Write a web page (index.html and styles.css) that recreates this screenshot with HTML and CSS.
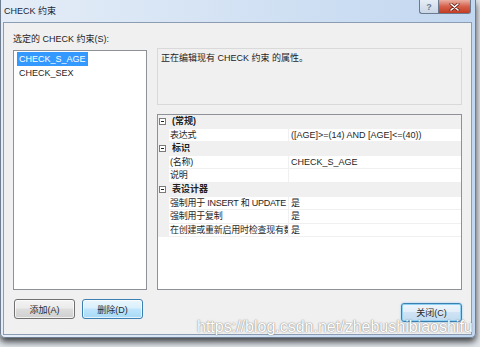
FILE: index.html
```html
<!DOCTYPE html>
<html lang="zh-CN">
<head>
  <meta charset="UTF-8" />
  <title>CHECK 约束</title>
  <meta name="viewport" content="width=device-width, initial-scale=1.0" />
  <link rel="stylesheet" href="styles.css">
</head>
<body>
  <div class="window">
    <div class="titlebar">
      <span class="title">CHECK 约束</span>
      <div class="caption-buttons">
        <span class="cap-btn help">?</span>
        <span class="cap-btn close">
          <svg width="11" height="8" viewBox="0 0 11 8">
            <path d="M2 1 L9 7 M9 1 L2 7" stroke="#6a2318" stroke-width="3" stroke-linecap="round" />
            <path d="M2 1 L9 7 M9 1 L2 7" stroke="#ffffff" stroke-width="1.6" stroke-linecap="round" />
          </svg>
        </span>
      </div>
    </div>

    <div class="client">
      <div class="main">
        <div class="left-col">
          <div class="label">选定的 CHECK 约束(S):</div>
          <div class="listbox">
            <div class="item"><span class="selected">CHECK_S_AGE</span></div>
            <div class="item"><span>CHECK_SEX</span></div>
          </div>
        </div>

        <div class="right-col">
          <div class="desc">正在编辑现有 CHECK 约束 的属性。</div>
          <div class="grid">
            <div class="row cat"><span class="gutter"><i class="toggle"></i></span><span class="cat-name">(常规)</span></div>
            <div class="row"><span class="gutter"></span><span class="name">表达式</span><span class="value">([AGE]&gt;=(14) AND [AGE]&lt;=(40))</span></div>
            <div class="row cat"><span class="gutter"><i class="toggle"></i></span><span class="cat-name">标识</span></div>
            <div class="row"><span class="gutter"></span><span class="name">(名称)</span><span class="value">CHECK_S_AGE</span></div>
            <div class="row"><span class="gutter"></span><span class="name">说明</span><span class="value"></span></div>
            <div class="row cat"><span class="gutter"><i class="toggle"></i></span><span class="cat-name">表设计器</span></div>
            <div class="row"><span class="gutter"></span><span class="name">强制用于 INSERT 和 UPDATE</span><span class="value">是</span></div>
            <div class="row"><span class="gutter"></span><span class="name">强制用于复制</span><span class="value">是</span></div>
            <div class="row"><span class="gutter"></span><span class="name">在创建或重新启用时检查现有数据</span><span class="value">是</span></div>
          </div>
        </div>
      </div>

      <div class="footer">
        <div class="btn-group">
          <button class="btn">添加(A)</button>
          <button class="btn hot">删除(D)</button>
        </div>
        <button class="btn default">关闭(C)</button>
      </div>
    </div>

    <div class="watermark">https://blog.csdn.net/zhebushibiaoshifu</div>
  </div>
</body>
</html>
```

FILE: styles.css
```css
body {
  margin: 0;
  width: 480px;
  height: 347px;
  overflow: hidden;
  background-color: #dfe4ea;
  font-family: "Liberation Sans", "Noto Sans CJK SC", sans-serif;
  font-size: 9px;
  color: #1e1e1e;
}

.window {
  position: relative;
  box-sizing: border-box;
  width: 476px;
  height: 338px;
  display: flex;
  flex-direction: column;
  padding: 0 3px 2px 2px;
  border: 1px solid #6e7d90;
  border-top: none;
  border-radius: 0 0 5px 5px;
  background: linear-gradient(to right, #e4edf7, #c2d7f0);
  box-shadow: 0 4px 6px rgba(0, 0, 0, 0.7);
}

.titlebar {
  height: 22px;
  flex-shrink: 0;
  display: flex;
  justify-content: space-between;
  align-items: flex-start;
}

.title {
  padding: 5px 0 0 1px;
  line-height: 12px;
  color: #1b2636;
}

.caption-buttons {
  display: flex;
  margin-right: 1px;
}

.cap-btn {
  box-sizing: border-box;
  height: 14px;
  display: flex;
  align-items: center;
  justify-content: center;
  border: 1px solid #6b7a8e;
  border-top: none;
}

.help {
  width: 19px;
  border-right: none;
  border-radius: 0 0 0 3px;
  background: linear-gradient(#e6edf6, #c9d6e6);
  color: #6a7a90;
  font-weight: bold;
  font-size: 9px;
}

.close {
  width: 33px;
  border-radius: 0 0 3px 0;
  background: linear-gradient(#eab0a3, #d6604a 50%, #c33c23);
}

.client {
  flex: 1;
  display: flex;
  flex-direction: column;
  background-color: #f0f0f0;
  border: 1px solid #8c9db3;
  padding: 9px 9px 0 9px;
}

.main {
  display: flex;
  gap: 10px;
}

.left-col {
  width: 134px;
  display: flex;
  flex-direction: column;
}

.label {
  line-height: 14px;
  margin-bottom: 4px;
}

.listbox {
  box-sizing: border-box;
  height: 240px;
  border: 1px solid #8e9298;
  background-color: #ffffff;
  padding: 1px 0 0 3px;
}

.item {
  height: 14px;
  line-height: 14px;
}

.item span {
  display: inline-block;
  padding: 0 2px;
}

.item .selected {
  background-color: #3399ff;
  color: #ffffff;
}

.right-col {
  width: 305px;
  padding-top: 16px;
  display: flex;
  flex-direction: column;
  gap: 9px;
}

.desc {
  box-sizing: border-box;
  height: 57px;
  border: 1px solid #d9d9d9;
  padding: 2px 3px;
  line-height: 14px;
}

.grid {
  box-sizing: border-box;
  height: 176px;
  border: 1px solid #8e9298;
  background-color: #ffffff;
}

.row {
  box-sizing: border-box;
  display: grid;
  grid-template-columns: 11px 120px 1fr;
  height: 13.6px;
  line-height: 12px;
  border-bottom: 1px solid #f0f0f0;
}

.row.cat {
  background-color: #f0f0f0;
}

.gutter {
  background-color: #f0f0f0;
  display: flex;
  align-items: center;
}

.toggle {
  position: relative;
  box-sizing: border-box;
  width: 7px;
  height: 7px;
  margin-left: 1px;
  border: 1px solid #7a7a7a;
  background-color: #ffffff;
}

.toggle::after {
  content: "";
  position: absolute;
  left: 1px;
  top: 2px;
  width: 3px;
  height: 1px;
  background-color: #222222;
}

.cat-name {
  grid-column: 2 / 4;
  padding-left: 3px;
  font-weight: bold;
}

.name {
  box-sizing: border-box;
  padding-left: 1px;
  border-right: 1px solid #f0f0f0;
  white-space: nowrap;
  overflow: hidden;
  letter-spacing: -0.25px;
}

.value {
  padding-left: 2px;
  white-space: nowrap;
  overflow: hidden;
}

.footer {
  display: flex;
  justify-content: space-between;
  align-items: flex-start;
  margin-top: 9px;
}

.btn-group {
  display: flex;
  gap: 7px;
  margin-left: 1px;
}

.btn {
  box-sizing: border-box;
  width: 61px;
  height: 20px;
  padding: 0;
  font-family: "Liberation Sans", "Noto Sans CJK SC", sans-serif;
  font-size: 9px;
  color: #2a2a2a;
  border: 1px solid #707070;
  border-radius: 3px;
  background: linear-gradient(#f3f3f3, #ebebeb 45%, #dddddd 50%, #cfcfcf);
  box-shadow: inset 0 0 0 1px rgba(255, 255, 255, 0.7);
}

.btn.hot {
  border-color: #3c7fb1;
  background: linear-gradient(#eaf6fd, #d9f0fc 45%, #bee6fd 50%, #a7d9f5);
}

.btn.default {
  height: 19px;
  margin-top: 4px;
  border-color: #3c7fb1;
  background: linear-gradient(#eef5fb, #e2eef9 45%, #cfe3f4 50%, #c2dbf0);
  box-shadow: inset 0 0 0 1px #8fd0f5, 0 0 2px #7fc4f0;
}

.watermark {
  position: absolute;
  left: 196px;
  top: 319px;
  font-family: "Liberation Sans", sans-serif;
  font-size: 16px;
  line-height: 16px;
  color: #ffffff;
  text-shadow: 0 0 1px rgba(90, 90, 90, 0.8), 0 0 2px rgba(120, 120, 120, 0.5);
  white-space: nowrap;
}
```
